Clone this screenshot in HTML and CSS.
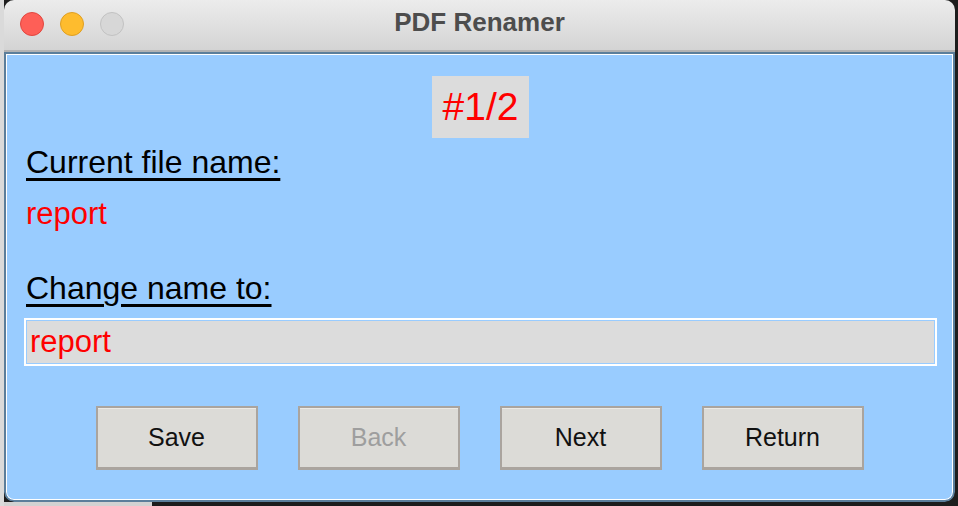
FILE: index.html
```html
<!DOCTYPE html>
<html>
<head>
<meta charset="utf-8">
<title>PDF Renamer</title>
<link rel="stylesheet" href="styles.css">
</head>
<body>
<div class="window">
  <div class="titlebar">
    <div class="lights">
      <span class="light red"></span>
      <span class="light yellow"></span>
      <span class="light gray"></span>
    </div>
    <div class="title">PDF Renamer</div>
    <div></div>
  </div>
  <div class="frame">
    <div class="counter-row"><div class="counter">#1/2</div></div>
    <div class="label label-current">Current file name:</div>
    <div class="value">report</div>
    <div class="label label-change">Change name to:</div>
    <div class="entry"><div class="entry-inner">report</div></div>
    <div class="buttons">
      <div class="btn">Save</div>
      <div class="btn disabled">Back</div>
      <div class="btn">Next</div>
      <div class="btn">Return</div>
    </div>
  </div>
</div>
</body>
</html>
```
FILE: styles.css
```css
html, body {
  margin: 0;
  padding: 0;
}
body {
  width: 958px;
  height: 506px;
  overflow: hidden;
  background:
    linear-gradient(#dadada, #dadada) no-repeat 0 0 / 4px 100%,
    linear-gradient(#d2d2d2, #d2d2d2) no-repeat 0 100% / 152px 4px,
    #1d1d1d;
  font-family: "Liberation Sans", Arial, sans-serif;
}
.window {
  margin-left: 4px;
  width: 951px;
  height: 502px;
  border-radius: 10px;
  overflow: hidden;
  display: flex;
  flex-direction: column;
}
.titlebar {
  height: 50px;
  flex: none;
  border-bottom: 2px solid #b3b3b3;
  background: linear-gradient(#ececec, #d4d4d4);
  display: grid;
  grid-template-columns: 1fr auto 1fr;
}
.lights {
  display: flex;
  gap: 16px;
  padding-left: 16px;
  padding-top: 12px;
  align-items: flex-start;
}
.light {
  width: 22px;
  height: 22px;
  border-radius: 50%;
  border: 1px solid transparent;
}
.light.red { background: #fe5f57; border-color: #e1463f; }
.light.yellow { background: #febc2e; border-color: #df9f22; }
.light.gray { background: #d7d7d7; border-color: #c2c2c2; }
.title {
  font-weight: bold;
  font-size: 26px;
  line-height: 44px;
  color: #4d4d4d;
}
.frame {
  flex: 1;
  background: #99ccff;
  border: 2px solid #5b7e9b;
  border-radius: 0 0 10px 10px;
  box-shadow: inset 0 0 0 1px #ffffff;
  padding: 0 16px 0 18px;
  display: flex;
  flex-direction: column;
}
.counter-row {
  display: flex;
  justify-content: center;
  margin-top: 22px;
}
.counter {
  background: #dcdcdc;
  color: #ff0000;
  font-size: 39px;
  line-height: 62px;
  height: 62px;
  padding: 0 11px;
}
.label {
  align-self: flex-start;
  padding-left: 2px;
  font-size: 32px;
  line-height: 36px;
  color: #000;
  text-decoration: underline;
  text-decoration-thickness: 3px;
  text-underline-offset: 5px;
}
.label-current { margin-top: 6px; }
.label-change { margin-top: 38px; }
.value {
  margin-top: 16px;
  padding-left: 2px;
  font-size: 31px;
  line-height: 36px;
  color: #ff0000;
}
.entry {
  margin-top: 12px;
  border: 2px solid #ffffff;
  padding: 1px;
}
.entry-inner {
  background: #dcdcdc;
  height: 42px;
  line-height: 42px;
  font-size: 31px;
  color: #ff0000;
  padding-left: 3px;
}
.buttons {
  margin-top: 40px;
  padding-right: 2px;
  display: flex;
  justify-content: center;
  gap: 40px;
}
.btn {
  box-sizing: border-box;
  width: 162px;
  height: 64px;
  background: #dcdbd7;
  border: 2px solid #aaa49e;
  border-bottom-width: 3px;
  box-shadow: inset 0 1px 0 #eceae6;
  font-size: 25px;
  color: #111;
  display: flex;
  align-items: center;
  justify-content: center;
}
.btn.disabled {
  color: #9e9e9e;
}
```
